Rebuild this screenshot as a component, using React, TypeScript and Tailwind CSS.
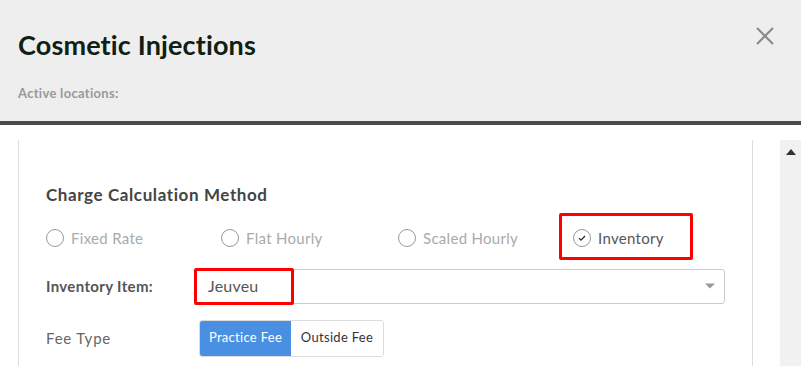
import React, { useState } from 'react';

const font = { fontFamily: 'Lato, "Open Sans", Arial, sans-serif' };

const methods = ['Fixed Rate', 'Flat Hourly', 'Scaled Hourly', 'Inventory'];

function Radio({ label, checked }: { label: string; checked: boolean }) {
  return (
    <div className="flex items-center gap-[7px]">
      <span className="flex h-[18px] w-[18px] items-center justify-center rounded-full border border-[#999]">
        {checked && (
          <svg width="10" height="10" viewBox="0 0 10 10">
            <path d="M2 5.2 L4 7.2 L8 3" fill="none" stroke="#222" strokeWidth="1.2" />
          </svg>
        )}
      </span>
      <span
        className={
          checked
            ? 'text-[15px] tracking-[0.3px] text-[#555]'
            : 'text-[15px] tracking-[0.3px] text-[#aaa]'
        }
      >
        {label}
      </span>
    </div>
  );
}

export default function App() {
  const [fee, setFee] = useState('practice');
  const selected = 'Inventory';

  return (
    <div className="relative h-[366px] w-[805px] overflow-hidden bg-white" style={font}>
      {/* header */}
      <div className="flex h-[121px] w-[801px] justify-between bg-[#eeeeee] pl-[18px] pr-[27px]">
        <div>
          <h1 className="pt-[28px] text-[27px] font-bold leading-[34px] tracking-[0.15px] text-[#0f1f13]">
            Cosmetic Injections
          </h1>
          <p className="pt-[22px] text-[13px] font-bold tracking-[0.3px] text-[#999]">Active locations:</p>
        </div>
        <button className="mt-[27px] h-[18px] w-[18px]">
          <svg width="18" height="18" viewBox="0 0 18 18">
            <path d="M1 1 L17 17 M17 1 L1 17" stroke="#888" strokeWidth="2" />
          </svg>
        </button>
      </div>
      <div className="h-[4px] w-[801px] bg-[#4a4a4a]" />

      <div className="flex pl-[18px] pt-[15px]">
        {/* form panel */}
        <div className="h-[260px] w-[735px] border-x border-[#ddd] pl-[27px] pt-[44px]">
          <h2 className="text-[17px] font-bold leading-[21px] tracking-[0.6px] text-[#444]">
            Charge Calculation Method
          </h2>

          <div className="mt-[22px] flex">
            {methods.map((m, i) => (
              <div key={m} className={i === 3 ? 'relative' : i === 1 ? 'w-[177px]' : 'w-[175px]'}>
                {m === selected && (
                  <div className="absolute -left-[14px] -top-[14px] h-[47px] w-[134px] rounded-[2px] border-[3px] border-[#f00]" />
                )}
                <Radio label={m} checked={m === selected} />
              </div>
            ))}
          </div>

          <div className="mt-[19px] flex items-center">
            <span className="w-[149px] text-[15px] font-bold tracking-[0.35px] text-[#555]">Inventory Item:</span>
            <div className="relative flex h-[35px] w-[530px] items-center justify-between rounded-[3px] border border-[#ccc] pl-[12px] pr-[8px]">
              <span className="text-[16px] tracking-[0.2px] text-[#555]">Jeuveu</span>
              <div className="absolute -left-[2px] -top-[2px] h-[37px] w-[100px] rounded-[2px] border-[3px] border-[#f00]" />
              <svg width="12" height="8" viewBox="0 0 12 8">
                <path d="M1 1.5 L11 1.5 L6 6.5 Z" fill="#999" />
              </svg>
            </div>
          </div>

          <div className="mt-[16px] flex items-center">
            <span className="w-[153px] text-[15px] tracking-[0.8px] text-[#666]">Fee Type</span>
            <div className="flex h-[37px] overflow-hidden rounded-[3px] border border-[#ddd]">
              <button
                onClick={() => setFee('practice')}
                className={
                  fee === 'practice'
                    ? 'w-[91px] bg-[#4a90e2] text-[13px] tracking-[0.3px] text-white'
                    : 'w-[91px] bg-white text-[13px] tracking-[0.3px] text-[#333]'
                }
              >
                Practice Fee
              </button>
              <button
                onClick={() => setFee('outside')}
                className={
                  fee === 'outside'
                    ? 'w-[92px] bg-[#4a90e2] text-[13px] tracking-[0.3px] text-white'
                    : 'w-[92px] bg-white text-[13px] tracking-[0.3px] text-[#333]'
                }
              >
                Outside Fee
              </button>
            </div>
          </div>
        </div>

        {/* scrollbar */}
        <div className="ml-[27px] flex h-[260px] w-[21px] justify-center bg-[#f1f1f1] pt-[9px]">
          <svg width="10" height="6" viewBox="0 0 10 6">
            <path d="M0 6 L5 0 L10 6 Z" fill="#333" />
          </svg>
        </div>
      </div>
    </div>
  );
}
